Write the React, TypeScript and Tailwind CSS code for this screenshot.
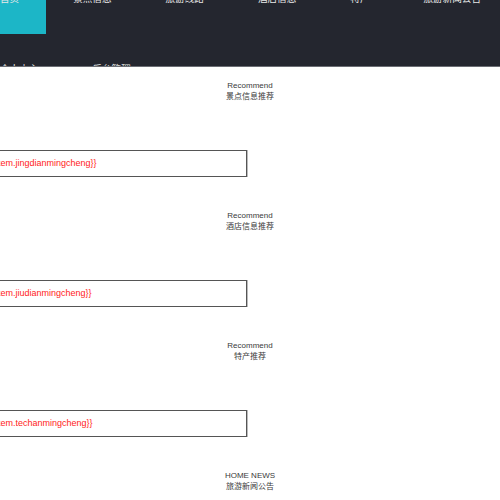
import React from "react";

const font = { fontFamily: '"Liberation Sans", "Noto Sans CJK SC", sans-serif' };

const navItems = ["首页", "景点信息", "旅游线路", "酒店信息", "特产", "旅游新闻公告", "个人中心", "后台管理"];

function Section({ en, zh, field }: { en: string; zh: string; field?: string }) {
  return (
    <div className="h-[130px] flex flex-col">
      <div className="flex flex-col items-center text-[8px] leading-[11px] text-[#3a3a3a]">
        <div>{en}</div>
        <div>{zh}</div>
      </div>
      {field && (
        <div className="mt-[48px] -ml-[20px] w-[267px] h-[27px] border border-[#555] shadow-[1px_0_0_#bbb] flex items-center px-[9px] text-[9px] text-[#ff1a1a]">
          {field}
        </div>
      )}
    </div>
  );
}

export default function App() {
  return (
    <div className="w-[500px] h-[500px] overflow-hidden bg-white" style={font}>
      <div className="h-[67px] bg-[#24262f] overflow-hidden border-b border-[#6b6d74]">
        <div className="flex flex-wrap w-[560px] -ml-[27px] -mt-[36px]">
          {navItems.map((t, i) => (
            <div
              key={t}
              className={`h-[70px] px-[27px] flex items-center text-[9.6px] text-[#e8e8e8] ${i === 0 ? "bg-[#1cb6c7]" : ""}`}
            >
              {t}
            </div>
          ))}
        </div>
      </div>
      <div className="pt-[13px]">
        <Section en="Recommend" zh="景点信息推荐" field="{{item.jingdianmingcheng}}" />
        <Section en="Recommend" zh="酒店信息推荐" field="{{item.jiudianmingcheng}}" />
        <Section en="Recommend" zh="特产推荐" field="{{item.techanmingcheng}}" />
        <Section en="HOME NEWS" zh="旅游新闻公告" />
      </div>
    </div>
  );
}
